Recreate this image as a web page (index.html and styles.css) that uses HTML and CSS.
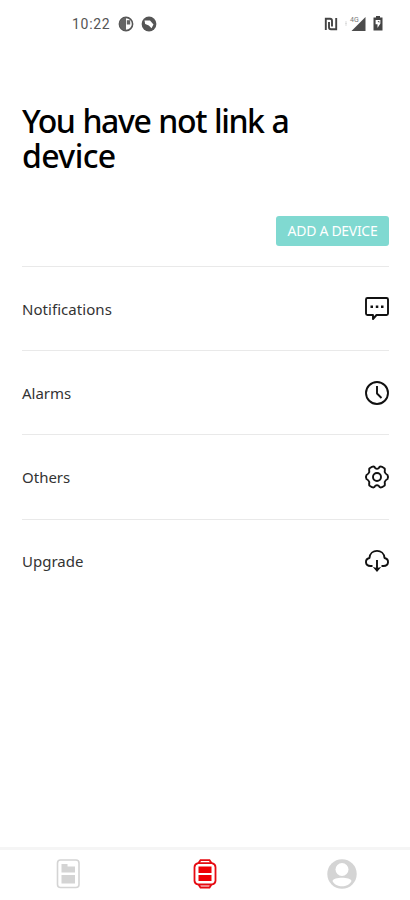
FILE: index.html
```html
<!DOCTYPE html>
<html lang="en">
<head>
<meta charset="utf-8">
<title>Device</title>
<link rel="stylesheet" href="styles.css">
</head>
<body>
<div class="screen">
  <header class="status">
    <div class="status-left">
      <span class="time">10:22</span>
      <svg width="16" height="16" viewBox="0 0 16 16"><circle cx="8" cy="8" r="6.6" fill="#fff" stroke="#555" stroke-width="1.6"/><path d="M8 1.5A6.5 6.500 0 0 0 8 14.500z" fill="#666"/><path d="M8.800 4.200h3.400v4.300H8.800z" fill="#666"/></svg>
      <svg width="16" height="16" viewBox="0 0 16 16"><circle cx="8" cy="8" r="7.4" fill="#555"/><path d="M3.500 4.500L9 4.500l3.500 4-2 3.800L7.800 9.500 4.200 8Z" fill="#fff"/></svg>
    </div>
    <div class="status-right">
      <svg width="14" height="14" viewBox="0 0 14 14"><path d="M1.800 13V1.800H6q2 0 2 2V9.500M5 5v5.200q0 2 2 2h5.200V1" fill="none" stroke="#444" stroke-width="1.900"/></svg>
      <svg width="23" height="17" viewBox="0 0 23 17"><path d="M21.500 2v14h-14z" fill="#4c4c4c"/><path d="M2 6v5M1 8.500h2" stroke="#ddd"/><text x="6" y="6.500" class="network">4G</text></svg>
      <svg width="10" height="15" viewBox="0 0 10 15"><path d="M3 0h4v1.500h2.500V14.500H.5V1.500H3z" fill="#444"/><path d="M2.600 4h4.800v3.500L4.500 12V8.200H2.600z" fill="#fff"/><path d="M4.500 5h1.800v2z" fill="#555"/></svg>
    </div>
  </header>
  <main class="content">
    <h1><span class="line-one">You have not link a</span><br><span class="line-two">device</span></h1>
    <button class="add">ADD A DEVICE</button>
    <ul class="menu">
      <li><span class="notifications">Notifications</span>
        <svg width="26" height="26" viewBox="0 0 26 26"><path d="M3.500 2h19q1.500 0 1.500 1.500v14q0 1.500-1.500 1.500H12.500l-3.500 4v-4H3.500Q2 19 2 17.500v-14Q2 2 3.500 2z" class="stroke"/><path d="M6.500 9.500h2.500V12H6.500zM11.800 9.500h2.500V12h-2.500zM17 9.500h2.500V12H17z"/></svg></li>
      <li><span class="alarms">Alarms</span>
        <svg width="26" height="26" viewBox="0 0 26 26"><circle cx="13" cy="13" r="11" class="stroke"/><path d="M13 6v7.500l4.500 4.500" class="stroke"/></svg></li>
      <li><span class="others">Others</span>
        <svg width="26" height="26" viewBox="0 0 26 26"><path d="M8 2.800Q10.500 2 11.300 4.200Q13 5.200 14.700 4.200Q15.500 2 18 2.800L20.700 4.500Q21 6 20.700 8Q21.500 10 23.500 11Q24.600 13 23.500 15Q21.500 16 20.700 18Q21 20 20.700 21.500L18 23.200Q15.500 24 14.700 21.800Q13 20.800 11.300 21.800Q10.500 24 8 23.200L5.300 21.500Q5 20 5.300 18Q4.500 16 2.500 15Q1.400 13 2.500 11Q4.500 10 5.300 8Q5 6 5.300 4.500Z" class="stroke"/><circle cx="13" cy="13" r="4" class="stroke"/></svg></li>
      <li><span class="upgrade">Upgrade</span>
        <svg width="26" height="26" viewBox="0 0 26 26"><path d="M8.500 18H6.500C.8 18 .5 11 5.500 10C6 .5 20 .5 20.500 10C25.500 11 25.200 18 19.500 18H17.500M13 12v8" class="stroke"/><path d="M8.800 19l4.200 1 4.200-1-4.200 5z"/></svg></li>
    </ul>
  </main>
  <nav class="tabs">
    <a><svg width="24" height="30" viewBox="0 0 24 30"><rect x="1.500" y="1" width="21.500" height="27.500" rx="3" fill="none" stroke="#d4d4d4" stroke-width="1.600"/><path d="M5.500 5h6v2.500h7.500v6h-13.500zM5.500 16h13.500v8.500h-13.500z" fill="#d4d4d4"/></svg></a>
    <a><svg width="24" height="30" viewBox="0 0 24 30"><path d="M5.500 4L7.500 1.200h9L18.500 4M5.500 25.500l2 3h9l2-3M5 4.200h14q3.500 1 3.500 4v13.500q0 2.800-3.500 3.800H5q-3.500-1-3.500-3.800V8.200q0-3 3.500-4z" fill="none" stroke="#e60b12" stroke-width="1.800"/><path d="M5.500 7.500h13V14h-13zM5.500 16h13v6h-13z" fill="#ee0005"/></svg></a>
    <a><svg width="30" height="30" viewBox="0 0 30 30"><circle cx="15" cy="15" r="14.700" fill="#d4d4d4"/><circle cx="15" cy="10.500" r="6.500" fill="#fff"/><path d="M5.500 22C6.500 17.800 23.500 17.800 24.500 22C21.500 29 8.500 29 5.500 22z" fill="#fff"/></svg></a>
  </nav>
</div>
</body>
</html>
```
FILE: styles.css
```css
* { box-sizing: border-box; }
body { margin: 0; background: #fff; color: #111; font-family: "Noto Sans", sans-serif; }
.screen { height: 900px; display: flex; flex-direction: column; overflow: hidden; }
.status { height: 47px; flex: none; display: flex; justify-content: space-between; align-items: center; padding: 0 27px 0 72px; }
.status-left, .status-right { display: flex; align-items: center; gap: 7px; }
.status-right { gap: 6px; }
.time { font: 14px/20px Roboto, sans-serif; color: #555; letter-spacing: .7px; margin-right: 1px; }
.network { font: 7px Roboto, sans-serif; fill: #777; }
.content { flex: 1; padding: 56px 21px 0 22px; display: flex; flex-direction: column; }
h1 { margin: 0; height: 113px; font-size: 32px; line-height: 35px; font-weight: 500; color: #000; white-space: nowrap; }
.line-one { letter-spacing: -1.4px; word-spacing: 1px; }
.line-two { letter-spacing: -.6px; }
.add { align-self: flex-end; width: 113px; height: 30px; padding: 0; border: 0; border-radius: 3px; background: #80d9d1; color: #fff; font: 14px/30px "Noto Sans", sans-serif; letter-spacing: -.3px; white-space: nowrap; }
.menu { list-style: none; margin: 20px 0 0; padding: 0; }
.menu li { height: 84.200px; border-top: 1px solid #e9e9e9; display: flex; align-items: center; justify-content: space-between; font-size: 15px; line-height: 20px; color: #333; }
.menu .notifications { letter-spacing: .05px; }
.menu svg { margin-right: -1px; fill: #111; }
.menu .stroke { fill: none; stroke: #111; stroke-width: 1.900; stroke-linejoin: round; }
.tabs { height: 53px; flex: none; border-top: 3px solid #f5f5f5; display: grid; grid-template-columns: repeat(3, 1fr); justify-items: center; padding-top: 9px; }
.tabs svg { display: block; }
```
